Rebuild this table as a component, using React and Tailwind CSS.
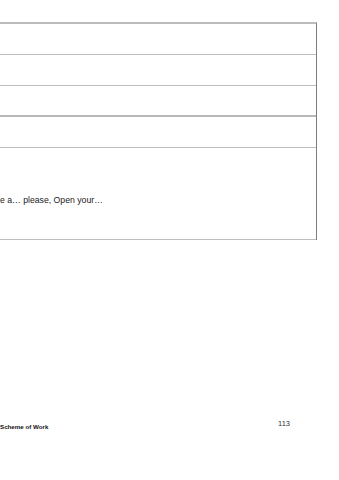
export default function App() {
    // row heights include their bottom border (border-box)
    const rows = [
        { h: "h-[31px]", border: "border-b border-[#bdbdbd]" },
        { h: "h-[31px]", border: "border-b border-[#bdbdbd]" },
        { h: "h-[31px]", border: "border-b-2 border-[#b8b8b8]" },
        { h: "h-[31px]", border: "border-b border-[#bdbdbd]" },
    ];

    return (
        <div className="h-[480px] w-[339px] overflow-hidden bg-white font-['Liberation_Sans',Arial,sans-serif]">
            {/* table continued from previous page */}
            <div className="pt-[22px]">
                <div className="w-[317px] border-t-2 border-r border-t-[#bcbcbc] border-r-[#7c7c7c]">
                    {rows.map((r, i) => (
                        <div key={i} className={`${r.h} ${r.border}`} />
                    ))}
                    <div className="h-[92px] border-b border-[#bdbdbd] pt-[47px]">
                        <p className="text-[8.7px] leading-[10px] text-[#222]">
                            e a… please, Open your…
                        </p>
                    </div>
                </div>
            </div>

            {/* page footer */}
            <div className="mt-[179px] flex w-[317px] items-start justify-between pr-[27px]">
                <span className="mt-[4px] text-[6.2px] font-bold leading-[8px] text-[#111]">
                    Scheme of Work
                </span>
                <span className="text-[7.5px] leading-[9px] text-[#333]">113</span>
            </div>
        </div>
    );
}
